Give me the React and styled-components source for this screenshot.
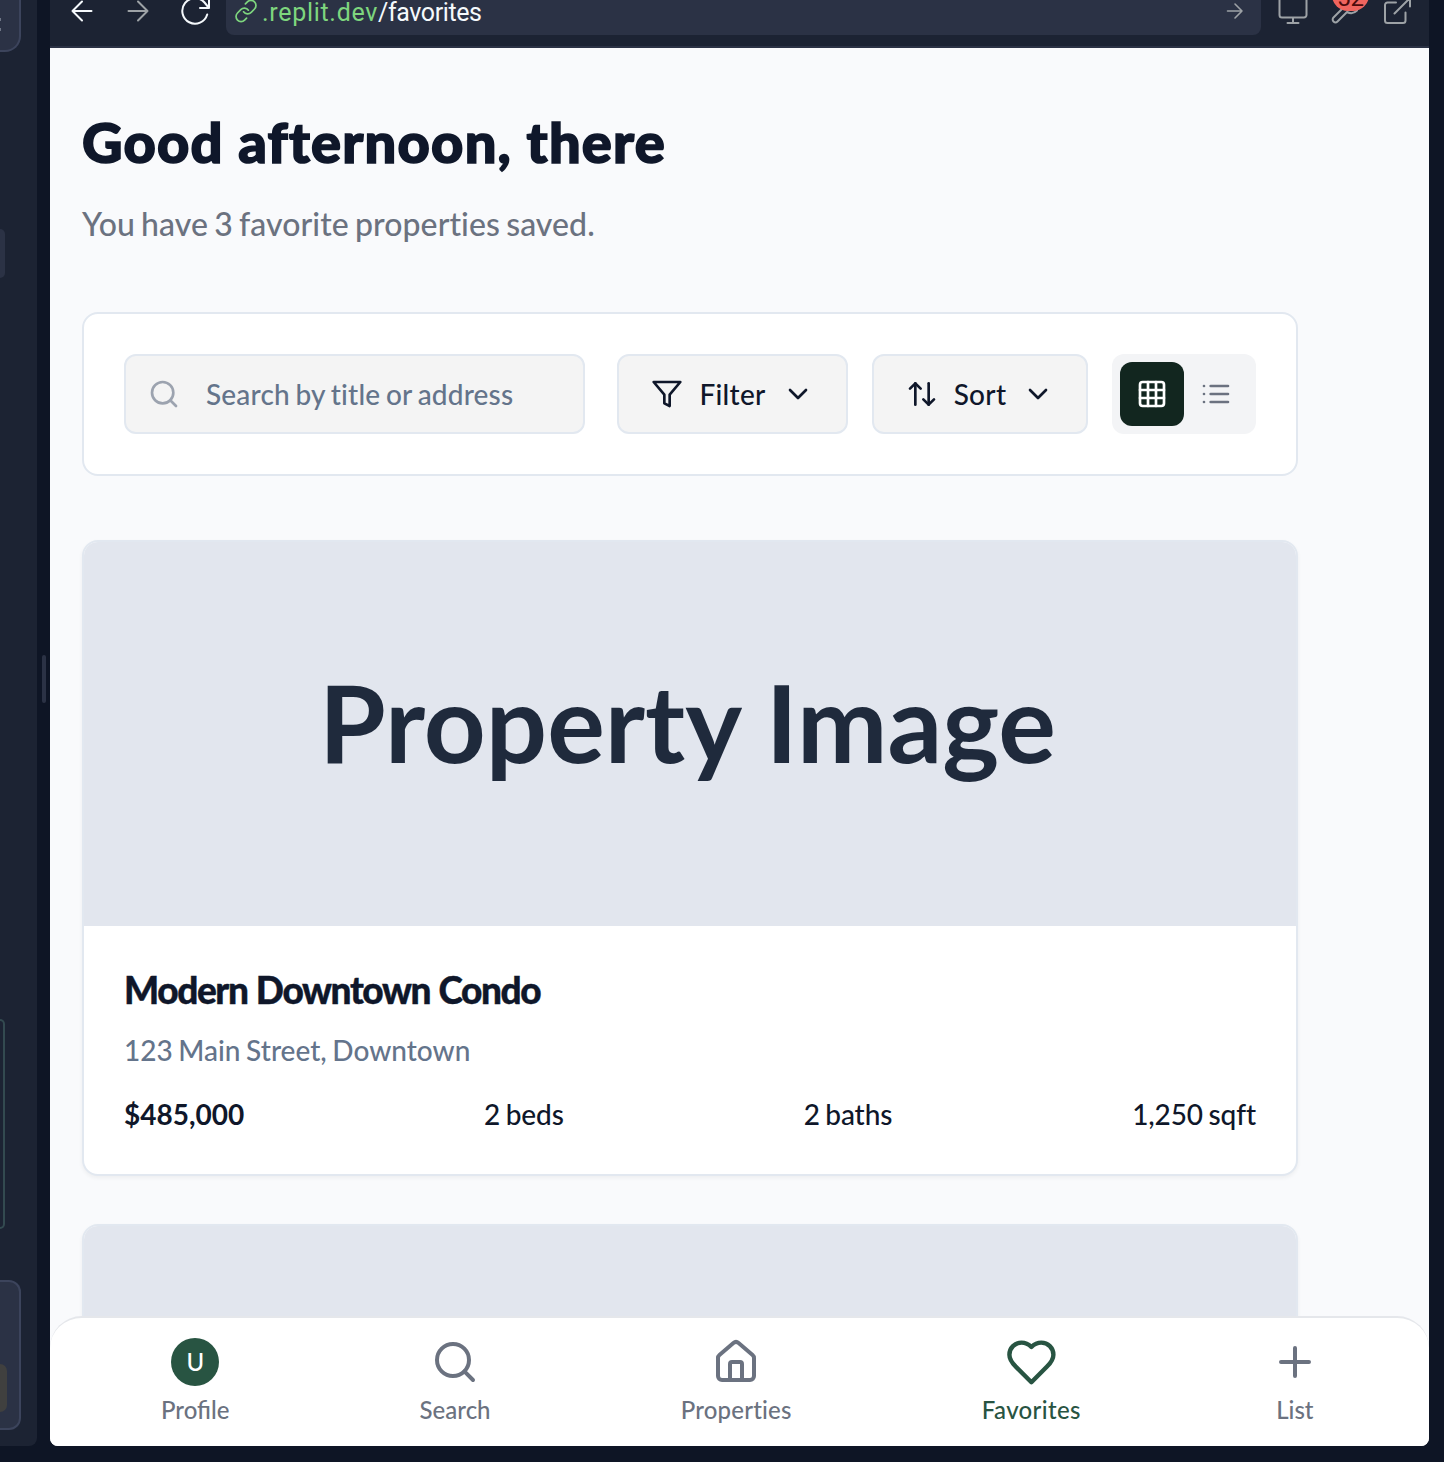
import React from "react";
import styled, { createGlobalStyle, css } from "styled-components";

const GlobalStyle = createGlobalStyle`
  * { box-sizing: border-box; }
  html, body { margin: 0; height: 100%; overflow: hidden; }
  body {
    background: #0e1525;
    font-family: Lato, "Liberation Sans", sans-serif;
    -webkit-font-smoothing: antialiased;
  }
  button, input { font: inherit; margin: 0; }
`;

/* ---------- Workspace shell ---------- */

const Workspace = styled.div`
  display: flex;
  width: 1444px;
  height: 1462px;
  padding: 0 15px 16px 0;
  overflow: hidden;
`;

const Sidebar = styled.aside`
  width: 37px;
  display: flex;
  flex-direction: column;
  align-items: flex-start;
  background: #1c2333;
  border-bottom-right-radius: 8px;
  overflow: hidden;
`;

const SidePanel = styled.div`
  flex: none;
  width: ${(p) => p.$width}px;
  height: ${(p) => p.$height}px;
  margin-top: ${(p) => p.$gap || 0}px;
  background: ${(p) => p.$fill || "transparent"};
  border: ${(p) => (p.$border ? `2px solid ${p.$border}` : "0")};
  border-left: 0;
  border-top: ${(p) => (p.$openTop ? "0" : undefined)};
  border-radius: ${(p) => (p.$openTop ? `0 0 ${p.$radius}px 0` : `0 ${p.$radius}px ${p.$radius}px 0`)};
`;

const PanelChip = styled.div`
  width: 7px;
  height: 48px;
  margin-top: 82px;
  background: #40403f;
  border-radius: 0 8px 8px 0;
`;

const PanelDots = styled.div`
  display: flex;
  flex-direction: column;
  gap: 7px;
  padding-top: 18px;

  &::before,
  &::after {
    content: "";
    width: 1px;
    height: 3px;
    background: #6f7686;
  }
`;

const Gutter = styled.div`
  width: 13px;
  padding: 655px 4px 0 5px;
`;

const Grip = styled.div`
  height: 48px;
  border-radius: 2px;
  background: #2b3245;
`;

const Preview = styled.section`
  flex: 1;
  min-width: 0;
  display: flex;
  flex-direction: column;
  border-radius: 0 0 8px 8px;
  overflow: hidden;
  background: #f9fafc;
`;

/* ---------- Browser bar ---------- */

const BrowserBar = styled.header`
  flex: none;
  display: flex;
  align-items: flex-start;
  height: 48px;
  padding: 0 4px 0 18px;
  background: #1c2333;
  border-bottom: 2px solid #2b3245;
`;

const BarIcon = styled.span`
  flex: none;
  display: flex;
  align-items: center;
  justify-content: center;
  width: ${(p) => p.$width}px;
  height: 22px;
  color: ${(p) => p.$color || "#9da2a6"};

  svg { flex: none; overflow: visible; }
`;

const AddressBar = styled.div`
  flex: none;
  display: flex;
  align-items: flex-start;
  width: 1035px;
  height: 35px;
  margin-left: 16px;
  padding: 0 14px 0 8px;
  background: #2b3245;
  border-radius: 0 0 8px 8px;
`;

const Address = styled.span`
  flex: 1;
  height: 22px;
  margin-left: 4px;
  font: 400 25px/25px Roboto, "Liberation Sans", sans-serif;
  letter-spacing: -0.4px;
  color: #f5f9fc;
`;

const Host = styled.span`
  color: #7ed67e;
  letter-spacing: 0.7px;
`;

const BadgeHolder = styled(BarIcon)`
  position: relative;
`;

const Badge = styled.span`
  position: absolute;
  right: 0;
  bottom: 11px;
  width: 37px;
  height: 32px;
  border-radius: 16px;
  background: #f0645e;
  color: #4c0b0b;
  font: 400 24px/38px Roboto, "Liberation Sans", sans-serif;
  text-align: center;
`;

/* ---------- Page ---------- */

const Page = styled.main`
  flex: 1;
  min-height: 0;
  overflow: hidden;
  padding: 56px 131px 0 32px;
`;

const Greeting = styled.h1`
  margin: 0;
  font-size: 56px;
  font-weight: 900;
  line-height: 75px;
  letter-spacing: 1.2px;
  -webkit-text-stroke: 1.6px currentColor;
  white-space: nowrap;
  color: #0f172a;
`;

const Summary = styled.p`
  margin: 21px 0 64px;
  font-size: 32px;
  font-weight: 500;
  line-height: 48px;
  letter-spacing: 0.08px;
  word-spacing: -2px;
  color: #6b7280;
`;

const frame = css`
  border: 2px solid #e2e8f0;
  border-radius: 16px;
  background: #fff;
`;

const Toolbar = styled.div`
  ${frame}
  display: flex;
  gap: 24px;
  height: 164px;
  padding: 40px;
`;

const field = css`
  display: flex;
  align-items: center;
  height: 80px;
  border: 2px solid #e2e8f0;
  border-radius: 12px;
  background: #f4f4f4;
  font-size: 28px;
`;

const SearchField = styled.label`
  ${field}
  width: 461px;
  margin-right: 8px;
  padding: 0 22px;
  gap: 26px;
  color: #9ca3af;
`;

const SearchInput = styled.input`
  flex: 1;
  min-width: 0;
  padding: 0;
  border: 0;
  outline: 0;
  background: none;
  font-weight: 500;
  letter-spacing: 0.17px;
  word-spacing: -1.5px;
  color: #0f172a;

  &::placeholder { color: #64748b; opacity: 1; }
`;

const MenuButton = styled.button`
  ${field}
  justify-content: space-between;
  width: ${(p) => p.$width}px;
  padding: 0 32px;
  font-weight: 500;
  letter-spacing: 0.3px;
  color: #0f172a;
`;

const ViewToggle = styled.div`
  display: flex;
  padding: 8px;
  border-radius: 12px;
  background: #f3f4f6;
`;

const ViewButton = styled.button`
  display: flex;
  align-items: center;
  justify-content: center;
  width: 64px;
  height: 64px;
  padding: 0;
  border: 0;
  border-radius: 12px;
  background: ${(p) => (p.$active ? "#12261f" : "transparent")};
  color: ${(p) => (p.$active ? "#fff" : "#6b7280")};
`;

const CardList = styled.div`
  display: flex;
  flex-direction: column;
  gap: 48px;
  margin-top: 64px;
`;

const Card = styled.article`
  ${frame}
  overflow: hidden;
  box-shadow: 0 2px 4px rgba(0, 0, 0, 0.05);
`;

const Photo = styled.div`
  display: flex;
  align-items: center;
  justify-content: center;
  height: 384px;
  padding: 0 5px 26px 0;
  background: #e2e6ee;
  color: #1f2a3c;
  font-size: 108px;
  font-weight: 700;
  line-height: 130px;
`;

const CardBody = styled.div`
  padding: 40px;
`;

const CardTitle = styled.h2`
  margin: 0 0 17px;
  font-size: 37px;
  font-weight: 900;
  line-height: 47px;
  letter-spacing: -1.4px;
  word-spacing: 1px;
  -webkit-text-stroke: 0.4px currentColor;
  color: #0f172a;
`;

const CardAddress = styled.p`
  margin: 0 0 24px;
  font-size: 28px;
  font-weight: 500;
  line-height: 40px;
  letter-spacing: 0.01px;
  word-spacing: -1.5px;
  color: #64748b;
`;

const Facts = styled.div`
  display: flex;
  justify-content: space-between;
  font-size: 28px;
  font-weight: 500;
  line-height: 40px;
  letter-spacing: -0.1px;
  word-spacing: -1.5px;
  color: #0f172a;
`;

const Price = styled.strong`
  font-weight: 700;
  letter-spacing: 0;
`;

/* ---------- Bottom navigation ---------- */

const BottomNav = styled.nav`
  position: relative;
  flex: none;
  display: flex;
  justify-content: space-around;
  height: 130px;
  margin-top: -130px;
  padding: 20px 15px 20px 16px;
  border-top: 2px solid #e5e7eb;
  border-radius: 32px 32px 0 0;
  background: #fff;
`;

const NavItem = styled.a`
  display: flex;
  flex-direction: column;
  align-items: center;
  gap: 8px;
  min-width: 48px;
  font-size: 24px;
  font-weight: 500;
  line-height: 32px;
  letter-spacing: ${(p) => p.$tracking || 0}px;
  color: ${(p) => (p.$active ? "#285442" : "#6b7280")};
`;

const NavIcon = styled.span`
  display: flex;
  align-items: center;
  justify-content: center;
  width: 48px;
  height: 48px;

  svg { flex: none; }
`;

const Avatar = styled(NavIcon)`
  border-radius: 50%;
  background: #285442;
  color: #fff;
  font-weight: 500;
`;

/* ---------- Icons ---------- */

const Glyph = ({ size = 32, children }) => (
  <svg width={size} height={size} viewBox="0 0 24 24" fill="none" stroke="currentColor"
    strokeWidth="2" strokeLinecap="round" strokeLinejoin="round">
    {children}
  </svg>
);

const SearchGlyph = ({ size }) => (
  <Glyph size={size}><circle cx="11" cy="11" r="8" /><path d="m21 21-4.3-4.3" /></Glyph>
);
const FilterGlyph = () => (
  <Glyph><polygon points="22 3 2 3 10 12.46 10 19 14 21 14 12.46 22 3" /></Glyph>
);
const SortGlyph = () => (
  <Glyph><path d="m21 16-4 4-4-4" /><path d="M17 20V4" /><path d="m3 8 4-4 4 4" /><path d="M7 4v16" /></Glyph>
);
const ChevronGlyph = () => <Glyph><path d="m6 9 6 6 6-6" /></Glyph>;
const GridGlyph = () => (
  <Glyph><rect x="3" y="3" width="18" height="18" rx="2" /><path d="M3 9h18M3 15h18M9 3v18M15 3v18" /></Glyph>
);
const ListGlyph = () => <Glyph><path d="M8 6h13M8 12h13M8 18h13M3 6h.01M3 12h.01M3 18h.01" /></Glyph>;
const HomeGlyph = () => (
  <Glyph size={48}>
    <path d="M15 21v-8a1 1 0 0 0-1-1h-4a1 1 0 0 0-1 1v8" />
    <path d="M3 10a2 2 0 0 1 .709-1.528l7-5.999a2 2 0 0 1 2.582 0l7 5.999A2 2 0 0 1 21 10v9a2 2 0 0 1-2 2H5a2 2 0 0 1-2-2z" />
  </Glyph>
);
const HeartGlyph = () => (
  <Glyph size={52.8}>
    <path d="M19 14c1.49-1.46 3-3.21 3-5.5A5.5 5.5 0 0 0 16.5 3c-1.76 0-3 .5-4.5 2-1.5-1.5-2.74-2-4.5-2A5.5 5.5 0 0 0 2 8.5c0 2.3 1.5 4.05 3 5.5l7 7Z" />
  </Glyph>
);
const PlusGlyph = () => <Glyph size={48}><path d="M5 12h14M12 5v14" /></Glyph>;

const Line = ({ width, height = 22, stroke = 2, children }) => (
  <svg width={width} height={height} viewBox={`0 0 ${width} ${height}`} fill="none"
    stroke="currentColor" strokeWidth={stroke} strokeLinecap="round" strokeLinejoin="round">
    {children}
  </svg>
);

const BackGlyph = () => <Line width={22}><path d="M20.500 11H1.500M11 1.500 1.500 11l9.500 9.500" /></Line>;
const ForwardGlyph = () => <Line width={22}><path d="M1.500 11h19M11 1.500l9.500 9.500-9.500 9.500" /></Line>;
const ReloadGlyph = () => (
  <Line width={30}><path d="M27.200 14.500A12.700 12.700 0 1 1 24.500 2.500L29 8M29-3V8H20" /></Line>
);
const LinkGlyph = () => (
  <svg width="24" height="24" viewBox="0 0 24 24" fill="none" stroke="currentColor" strokeWidth="1.700"
    strokeLinecap="round">
    <path d="M9.600 12.800a5 5 0 0 0 7.600.500l3.300-3.300a5 5 0 0 0-7.100-7.100l-2 2" />
    <path d="M14.400 11.200a5 5 0 0 0-7.600-.500l-3.300 3.300a5 5 0 0 0 7.100 7.100l2-2" />
  </svg>
);
const GoGlyph = () => <Line width={18} stroke={1.6}><path d="M1.500 11h14.500M9 4l7 7-7 7" /></Line>;
const MonitorGlyph = () => (
  <Line width={30}><path d="M1.500-5V15a2.500 2.500 0 0 0 2.500 2.500h22a2.500 2.500 0 0 0 2.500-2.500V-5M15 18v5M9.500 23h11" /></Line>
);
const WrenchGlyph = () => (
  <Line width={38}><path d="M15 8 5.500 17.500a2.800 2.800 0 0 0 4 4L19 12c3.500 1.800 7.500 1 10-1.500" /></Line>
);
const OpenGlyph = () => (
  <Line width={28}><path d="M13 2.500H4.500A2.500 2.500 0 0 0 2 5v15.500A2.500 2.500 0 0 0 4.500 23H20a2.500 2.500 0 0 0 2.500-2.500V12.500M11.500 13.500 27-2M27 6.500V-3" /></Line>
);

/* ---------- App ---------- */

export default function App() {
  return (
    <>
      <GlobalStyle />
      <Workspace>
        <Sidebar>
          <SidePanel $width={21} $height={52} $radius={16} $fill="#2b3245" $border="#3c445c" $openTop>
            <PanelDots />
          </SidePanel>
          <SidePanel $width={5} $height={49} $gap={177} $radius={8} $fill="#2b3245" />
          <SidePanel $width={5} $height={210} $gap={741} $radius={12} $border="#334a50" />
          <SidePanel $width={21} $height={150} $gap={51} $radius={12} $fill="#2b3245" $border="#3c445c">
            <PanelChip />
          </SidePanel>
        </Sidebar>
        <Gutter><Grip /></Gutter>

        <Preview>
          <BrowserBar>
            <BarIcon $width={28} $color="#f5f9fc"><BackGlyph /></BarIcon>
            <BarIcon $width={84}><ForwardGlyph /></BarIcon>
            <BarIcon $width={30} $color="#f5f9fc"><ReloadGlyph /></BarIcon>
            <AddressBar>
              <BarIcon $width={24} $color="#7ed67e"><LinkGlyph /></BarIcon>
              <Address><Host>.replit.dev</Host>/favorites</Address>
              <BarIcon $width={24}><GoGlyph /></BarIcon>
            </AddressBar>
            <BarIcon $width={64}><MonitorGlyph /></BarIcon>
            <BadgeHolder $width={44}><WrenchGlyph /><Badge>52</Badge></BadgeHolder>
            <BarIcon $width={56}><OpenGlyph /></BarIcon>
          </BrowserBar>

          <Page>
            <Greeting>Good afternoon, there</Greeting>
            <Summary>You have 3 favorite properties saved.</Summary>

            <Toolbar>
              <SearchField>
                <SearchGlyph />
                <SearchInput placeholder="Search by title or address" />
              </SearchField>
              <MenuButton $width={231}><FilterGlyph />Filter<ChevronGlyph /></MenuButton>
              <MenuButton $width={216}><SortGlyph />Sort<ChevronGlyph /></MenuButton>
              <ViewToggle>
                <ViewButton $active><GridGlyph /></ViewButton>
                <ViewButton><ListGlyph /></ViewButton>
              </ViewToggle>
            </Toolbar>

            <CardList>
              <Card>
                <Photo>Property Image</Photo>
                <CardBody>
                  <CardTitle>Modern Downtown Condo</CardTitle>
                  <CardAddress>123 Main Street, Downtown</CardAddress>
                  <Facts>
                    <Price>$485,000</Price>
                    <span>2 beds</span>
                    <span>2 baths</span>
                    <span>1,250 sqft</span>
                  </Facts>
                </CardBody>
              </Card>
              <Card>
                <Photo />
              </Card>
            </CardList>
          </Page>

          <BottomNav>
            <NavItem><Avatar>U</Avatar>Profile</NavItem>
            <NavItem><NavIcon><SearchGlyph size={48} /></NavIcon>Search</NavItem>
            <NavItem $tracking={0.2}><NavIcon><HomeGlyph /></NavIcon>Properties</NavItem>
            <NavItem $tracking={0.35} $active><NavIcon><HeartGlyph /></NavIcon>Favorites</NavItem>
            <NavItem><NavIcon><PlusGlyph /></NavIcon>List</NavItem>
          </BottomNav>
        </Preview>
      </Workspace>
    </>
  );
}
